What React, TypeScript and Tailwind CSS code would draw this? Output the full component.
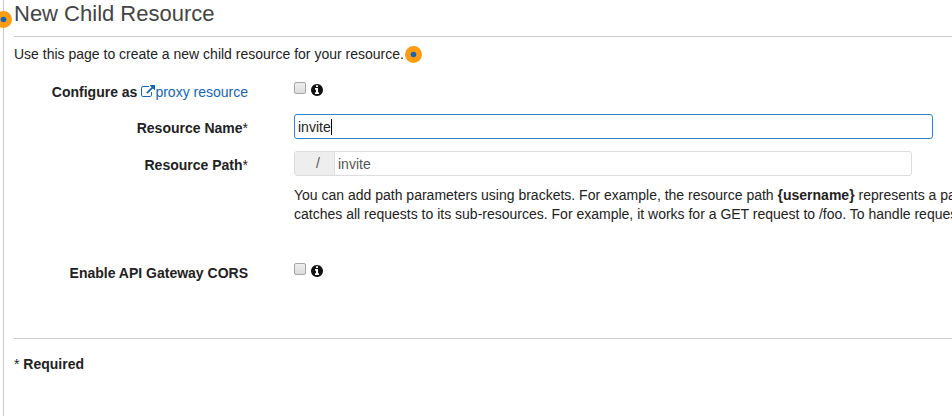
import React from "react";

function Beacon() {
  return (
    <svg className="size-[17px] shrink-0" viewBox="0 0 17 17">
      <circle cx="8.5" cy="8.5" r="8.5" fill="#ff9c12" />
      <circle cx="8.5" cy="8.5" r="2.8" fill="#1166bb" />
    </svg>
  );
}

function ExternalLink() {
  return (
    <svg className="h-[13px] w-[14px] shrink-0" viewBox="0 0 1792 1664" fill="#1166bb">
      <path d="M1408 928v320q0 119-84.5 203.5t-203.5 84.5h-832q-119 0-203.5-84.5t-84.5-203.5v-832q0-119 84.5-203.5t203.5-84.5h704q14 0 23 9t9 23v64q0 14-9 23t-23 9h-704q-66 0-113 47t-47 113v832q0 66 47 113t113 47h832q66 0 113-47t47-113v-320q0-14 9-23t23-9h64q14 0 23 9t9 23zm384-864v512q0 26-19 45t-45 19-45-19l-176-176-652 652q-10 10-23 10t-23-10l-114-114q-10-10-10-23t10-23l652-652-176-176q-19-19-19-45t19-45 45-19h512q26 0 45 19t19 45z" />
    </svg>
  );
}

function Info() {
  return (
    <svg className="mt-1 ml-[5px] size-3 shrink-0" viewBox="128 128 1536 1536" fill="#111">
      <path d="M1152 1376v-160q0-14-9-23t-23-9h-96v-512q0-14-9-23t-23-9h-320q-14 0-23 9t-9 23v160q0 14 9 23t23 9h96v320h-96q-14 0-23 9t-9 23v160q0 14 9 23t23 9h448q14 0 23-9t9-23zm-128-896v-160q0-14-9-23t-23-9h-192q-14 0-23 9t-9 23v160q0 14 9 23t23 9h192q14 0 23-9t9-23zm640 416q0 209-103 385.5t-279.5 279.5-385.5 103-385.5-103-279.5-279.5-103-385.5 103-385.5 279.5-279.5 385.5-103 385.5 103 279.5 279.5 103 385.5z" />
    </svg>
  );
}

function Check() {
  return (
    <div className="flex h-3 items-center">
      <span className="size-3 rounded-[2px] border border-[#a6a6a6] bg-linear-to-b from-[#eee] to-[#dcdcdc]" />
      <Info />
    </div>
  );
}

export default function App() {
  return (
    <div className="h-[416px] w-[952px] overflow-hidden bg-white pl-[3px] font-['Liberation_Sans',Arial,sans-serif] text-[14px] leading-[19px] text-[#222]">
      <div className="h-full border-l border-[#ccc] pl-[10px]">
        <header className="relative flex h-[37px] items-start border-b border-[#ccc]">
          <div className="absolute top-[11px] -left-[19px]"><Beacon /></div>
          <h1 className="text-[22px] leading-[27px] whitespace-nowrap text-[#444]">New Child Resource</h1>
        </header>
        <div className="flex h-[35px] items-center gap-px">
          <span className="whitespace-nowrap">Use this page to create a new child resource for your resource.</span>
          <Beacon />
        </div>
        <form className="grid grid-cols-[234px_1fr] gap-x-[46px]">
          <div className="flex h-[42px] justify-end pt-[11px] font-bold">
            Configure as
            <a className="ml-1 flex font-normal text-[#1166bb]"><span className="pt-[2px]"><ExternalLink /></span>proxy resource</a>
          </div>
          <div className="pt-[10px]"><Check /></div>

          <label className="h-[37px] pt-[5px] text-right font-bold">Resource Name<span className="font-normal">*</span></label>
          <div>
            <div className="flex h-[25px] w-[639px] items-center rounded-[3px] border border-[#2a83d4] pt-px pl-[3px]">
              invite<span className="h-4 w-px bg-black" />
            </div>
          </div>

          <label className="h-[35px] pt-[5px] text-right font-bold">Resource Path<span className="font-normal">*</span></label>
          <div>
            <div className="flex h-[25px] w-[618px] items-center overflow-hidden rounded-[3px] border border-[#ddd] text-[#555]">
              <span className="flex h-full w-10 items-center border-r border-[#ddd] bg-[#eee] pl-[21px]">/</span>
              <span className="pt-[2px] pl-[3px]">invite</span>
            </div>
          </div>

          <div />
          <div className="h-[75px] w-[658px] overflow-hidden whitespace-nowrap">
            <p>You can add path parameters using brackets. For example, the resource path <b>{"{username}"}</b> represents a path</p>
            <p>catches all requests to its sub-resources. For example, it works for a GET request to /foo. To handle requests</p>
          </div>

          <div className="h-[77px] pt-[3px] text-right font-bold">Enable API Gateway CORS</div>
          <div className="pt-[2px]"><Check /></div>
        </form>
        <footer className="border-t border-[#ccc] pt-4 font-bold"><span className="font-normal">*</span> Required</footer>
      </div>
    </div>
  );
}
